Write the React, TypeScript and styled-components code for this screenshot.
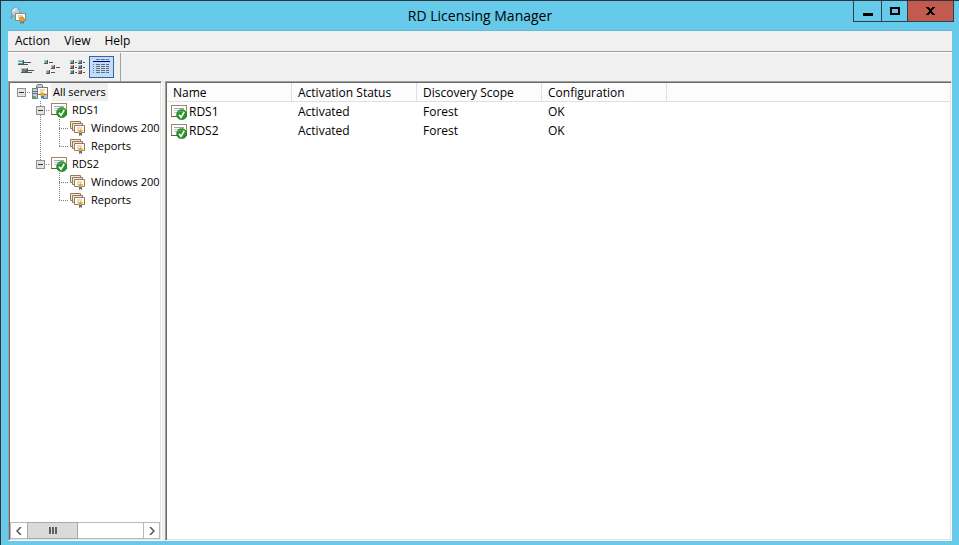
import React from "react";
import styled, { createGlobalStyle, css } from "styled-components";

const GlobalStyle = createGlobalStyle`
  *, *::before, *::after { box-sizing: border-box; }
  body { margin: 0; }
  body, button, table {
    font-family: "Open Sans", "Noto Sans", sans-serif;
    font-size: 12px;
    line-height: 18px;
    color: #000;
  }
  button { margin: 0; padding: 0; border: 0; background: none; }
  svg { display: block; }
`;

const Window = styled.div`
  display: flex;
  flex-direction: column;
  height: 100vh;
  padding: 0 7px 4px;
  border-top: 1px solid #30343a;
  border-left: 1px solid #30343a;
  background: #66caea;
  overflow: hidden;
`;

const TitleBar = styled.header`
  display: grid;
  grid-template-columns: 1fr auto 1fr;
  flex: none;
  height: 30px;
  border-bottom: 1px solid #6fb4d0;
`;

const AppIcon = styled.div`
  padding: 6px 2px;
`;

const Title = styled.h1`
  margin: 0;
  font-size: 14px;
  font-weight: 400;
  line-height: 29px;
`;

const Captions = styled.div`
  display: flex;
  justify-self: end;
  height: 22px;
  margin: -1px -2px 0 0;
  border: 1px solid #2f3e4c;
`;

const CaptionButton = styled.button<{ $width: number; $close?: boolean }>`
  display: grid;
  place-items: center;
  width: ${(p) => p.$width}px;
  background: ${(p) => (p.$close ? "#c25a50" : "transparent")};
  & + & { border-left: 1px solid #2f3e4c; }
`;

const Client = styled.main`
  display: flex;
  flex-direction: column;
  flex: 1;
  min-height: 0;
  background: #f0f0f0;
`;

const MenuBar = styled.nav`
  display: flex;
  height: 20px;
  flex: none;
`;

const MenuButton = styled.button`
  padding: 0 7px;
  line-height: 20px;
`;

const ToolBar = styled.div`
  display: flex;
  align-items: center;
  flex: none;
  height: 30px;
  padding-left: 6px;
  border-top: 1px solid #a0a0a0;
  box-shadow: inset 0 1px #fff;
`;

const ToolButton = styled.button<{ $active?: boolean }>`
  display: grid;
  place-items: center;
  width: 25px;
  height: 22px;
  border: 1px solid transparent;
  ${(p) => p.$active && css`
    border-color: #336699;
    background: #c2dcff;
  `}
`;

const ToolSeparator = styled.div`
  align-self: stretch;
  width: 1px;
  margin: 1px 0 0 6px;
  background: #a0a0a0;
`;

const Panes = styled.div`
  display: flex;
  flex: 1;
  gap: 3px;
  min-height: 0;
`;

const sunken = css`
  padding: 1px;
  border: 1px solid;
  border-color: #a0a0a0 #fff #fff #a0a0a0;
  box-shadow: inset 1px 1px #696969, inset -1px -1px #e3e3e3;
  background: #fff;
`;

const TreePane = styled.aside`
  ${sunken}
  display: flex;
  flex-direction: column;
  flex: none;
  width: 154px;
`;

const Tree = styled.div`
  flex: 1;
  padding-left: 2px;
  overflow: hidden;
  font-size: 11px;
`;

const TreeRow = styled.div`
  display: flex;
  height: 18px;
  white-space: nowrap;
`;

const TreeLabel = styled.span<{ $selected?: boolean }>`
  margin-left: 3px;
  padding: 0 2px;
  background: ${(p) => (p.$selected ? "#f0f0f0" : "transparent")};
`;

const TreeIcon = styled.span`
  flex: none;
  width: 17px;
  padding: 1px 0 0 1px;
`;

type GuideKind = "none" | "root" | "line" | "tee" | "end";

const dotsDown = "repeating-linear-gradient(to bottom, #808080 0 1px, transparent 1px 2px)";
const dotsAcross = "repeating-linear-gradient(to right, #808080 0 1px, transparent 1px 2px)";
const guides: Record<GuideKind, string> = {
  none: "none",
  root: `${dotsAcross} 9px 9px / 10px 1px no-repeat`,
  line: `${dotsDown} 9px 0 / 1px 18px no-repeat`,
  tee: `${dotsDown} 9px 0 / 1px 18px no-repeat, ${dotsAcross} 9px 9px / 10px 1px no-repeat`,
  end: `${dotsDown} 9px 0 / 1px 10px no-repeat, ${dotsAcross} 9px 9px / 10px 1px no-repeat`,
};

const Guide = styled.span<{ $kind: GuideKind }>`
  display: grid;
  place-items: center;
  flex: none;
  width: 19px;
  height: 18px;
  padding-top: 1px;
  background: ${(p) => guides[p.$kind]};
`;

const Expander = styled.button`
  width: 9px;
  height: 9px;
  border: 1px solid #919191;
  background: linear-gradient(#333, #333) 1px 3px / 5px 1px no-repeat, #e4e4e4;
`;

const ScrollBar = styled.div`
  display: flex;
  flex: none;
  height: 17px;
  border: 1px solid #b8b8b8;
  background: #fff;
`;

const ScrollArrow = styled.button<{ $side: "left" | "right" }>`
  display: grid;
  place-items: center;
  width: 16px;
  ${(p) => (p.$side === "right" ? "margin-left: auto; border-left: 1px solid #b8b8b8;" : "")}
`;

const ScrollThumb = styled.button`
  display: grid;
  place-items: center;
  width: 51px;
  margin: -1px 0;
  border: 1px solid #a8a8a8;
  background: #dadada;
`;

const ListPane = styled.section`
  ${sunken}
  flex: 1;
  min-width: 0;
`;

const Table = styled.table`
  width: 100%;
  border-collapse: separate;
  border-spacing: 0;
  table-layout: fixed;
`;

const Column = styled.col`
  width: 125px;
`;

const HeadCell = styled.th`
  height: 19px;
  padding: 2px 6px 0;
  border-right: 1px solid #e0e0e0;
  border-bottom: 1px solid #e0e0e0;
  background: #fcfcfc;
  font-weight: 400;
  line-height: 16px;
  text-align: left;
  white-space: nowrap;
  &:last-child { border-right: 0; }
`;

const Cell = styled.td`
  height: 19px;
  padding: 0 6px;
`;

const NameCell = styled(Cell)`
  padding: 0 4px;
`;

const NameContent = styled.div`
  display: flex;
  align-items: center;
  gap: 2px;
`;

function SearchLicenseIcon() {
  return (
    <svg width="17" height="17" viewBox="0 0 17 17" aria-hidden="true">
      <circle cx="5.5" cy="5" r="4.2" fill="#b7d3df" stroke="#8697a0" />
      <path d="M3 5a3 3 0 0 1 4-3" fill="none" stroke="#edf6fa" strokeWidth="1.3" />
      <path d="M2 8 1 12" stroke="#8b8f92" strokeWidth="1.6" />
      <rect x="5.5" y="6.5" width="10" height="7" fill="#fffdf6" stroke="#a08760" />
      <path d="M8 9h5M8 11h3" stroke="#a7adb4" />
      <path d="M10 13v4l2-1 2 1v-4" fill="#577fae" />
      <circle cx="12" cy="12.5" r="2.4" fill="#e6a321" stroke="#b3741b" strokeWidth=".6" />
    </svg>
  );
}

function ServersIcon() {
  return (
    <svg width="16" height="16" viewBox="0 0 16 16" aria-hidden="true">
      <path d="M4.5 1.5 6 .5h4l.5 1V7h-6z" fill="#c3ced6" stroke="#72828d" />
      <rect x=".5" y="4.5" width="5" height="10" fill="#c8d2d9" stroke="#72828d" />
      <path d="M1 7.5h4M1 9.5h4" stroke="#5b7281" />
      <rect x="1" y="12" width="3" height="2" fill="#5ab24b" />
      <rect x="11.5" y="8.5" width="4" height="6" fill="#aecde0" stroke="#72828d" />
      <rect x="5.5" y="3.5" width="10" height="7" fill="#fffdf8" stroke="#8a765c" />
      <path d="M8 6h5M8 8h2" stroke="#b5b5b5" />
      <path d="M9 11v4l1.5-1 1.5 1v-4" fill="#3b78bd" />
      <path d="m10.500 7.500 1 1.500 1.700.2-.8 1.500.5 1.700-2.400-.3-2 .3.300-1.700-.8-1.500 1.700-.2z" fill="#eda51e" />
    </svg>
  );
}

function ActivatedServerIcon() {
  return (
    <svg width="16" height="16" viewBox="0 0 16 16" aria-hidden="true">
      <rect x=".5" y="1.5" width="15" height="11" fill="#fffefa" stroke="#9c8765" />
      <path d="M0 12.5h16" stroke="#6b5942" />
      <path d="M3 4.5h10" stroke="#9ba6c4" />
      <path d="M3 6.5h7M3 8.5h4" stroke="#c2c7d5" />
      <circle cx="10.7" cy="10.7" r="5.1" fill="#259424" stroke="#17701c" strokeWidth=".6" />
      <path d="M7 8.5a5 5 0 0 1 7 0" fill="none" stroke="#66b75e" />
      <path d="m8 10.7 2 2.6 3.200-5.300" fill="none" stroke="#fff" strokeWidth="1.6" />
    </svg>
  );
}

function LicensesIcon() {
  return (
    <svg width="16" height="16" viewBox="0 0 16 16" aria-hidden="true">
      <g fill="#f0e6d6" stroke="#95795a">
        <path d="M.5 1.5h10v7H.5z" />
        <path d="M2.5 3.5h10v7h-10z" />
        <path d="M4.5 5.5h10v7h-10z" fill="#fffdf8" />
      </g>
      <path d="M7 8h5M7 10h2" stroke="#c4b9aa" />
      <path d="M9 12v4l1.5-1 1.5 1v-4" fill="#3c73ba" />
      <path d="m10.500 8.700.9 1.500 1.800.1-.9 1.500.4 1.600-2.200-.4-2.200.4.400-1.600-.9-1.500 1.800-.1z" fill="#eba41f" />
    </svg>
  );
}

function Tile({ x, y, w, h, color }: { x: number; y: number; w: number; h: number; color: string }) {
  return (
    <>
      <rect x={x} y={y} width={w} height={h} fill="#555" />
      <rect x={x} y={y} width={w - 1} height={h - 1} fill="#b8c4c4" />
      <rect x={x + 1} y={y + 1} width={w - 2} height={h - 2} fill={color} />
    </>
  );
}

const toolIcon = { width: 17, height: 16, viewBox: "0 0 17 16", shapeRendering: "crispEdges", "aria-hidden": true } as const;

function LargeViewIcon() {
  return (
    <svg {...toolIcon}>
      <Tile x={0} y={1} w={6} h={5} color="#3d9fb4" />
      <rect x="1" y="3" width="3" height="1" fill="#e8f8fa" />
      <path d="M6 3.500h7M6 5.500h4" stroke="#555" />
      <Tile x={3} y={9} w={7} h={5} color="#3da052" />
      <rect x="4" y="10" width="2" height="2" fill="#d04c32" />
      <rect x="7" y="11" width="2" height="2" fill="#3c6bd0" />
      <path d="M10 11.500h6M10 13.500h4" stroke="#555" />
    </svg>
  );
}

function SmallViewIcon() {
  return (
    <svg {...toolIcon}>
      <Tile x={1} y={1} w={4} h={4} color="#4cae9b" />
      <path d="M6 3.500h4" stroke="#555" />
      <Tile x={8} y={6} w={4} h={4} color="#c85b32" />
      <path d="M13 8.500h4" stroke="#555" />
      <Tile x={3} y={11} w={4} h={4} color="#51ad59" />
      <path d="M8 13.500h4" stroke="#555" />
    </svg>
  );
}

const listTiles = [
  [2, 1, "#399f9d"], [10, 1, "#3c9cb1"],
  [2, 6, "#c64f31"], [10, 6, "#377fac"],
  [2, 11, "#429c55"], [10, 11, "#c64f31"],
] as const;

function ListViewIcon() {
  return (
    <svg {...toolIcon}>
      {listTiles.map(([x, y, color]) => (
        <g key={`${x}-${y}`}>
          <Tile x={x} y={y} w={4} h={4} color={color} />
          <path d={`M${x + 5} ${y + 2}.5h2`} stroke="#555" />
        </g>
      ))}
    </svg>
  );
}

function DetailsViewIcon() {
  return (
    <svg {...toolIcon}>
      <path d="M3 .5h4M8 .5h4M13 .5h3" stroke="#6b7680" />
      <path d="M0 2.500h17" stroke="#00007b" />
      {[5, 7, 9, 11, 13].map((y, i) => (
        <g key={y}>
          <rect x="0" y={y} width="1" height="1" fill={["#3c8ca0", "#3f9b72", "#368dcc", "#c34d3c", "#4d9b42"][i]} />
          <path d={`M3 ${y}.5h4M8 ${y}.5h4M13 ${y}.5h3`} stroke="#606c78" />
        </g>
      ))}
    </svg>
  );
}

const toolButtons = [
  { label: "Large icons", Icon: LargeViewIcon },
  { label: "Small icons", Icon: SmallViewIcon },
  { label: "List", Icon: ListViewIcon },
  { label: "Details", Icon: DetailsViewIcon, active: true },
];

type Node = { text: string; guides: GuideKind[]; Icon: () => React.JSX.Element; level: number; expandable?: boolean; selected?: boolean };

const treeNodes: Node[] = [
  { text: "All servers", level: 1, guides: ["root"], Icon: ServersIcon, expandable: true, selected: true },
  { text: "RDS1", level: 2, guides: ["none", "tee"], Icon: ActivatedServerIcon, expandable: true },
  { text: "Windows 200", level: 3, guides: ["none", "line", "tee"], Icon: LicensesIcon },
  { text: "Reports", level: 3, guides: ["none", "line", "end"], Icon: LicensesIcon },
  { text: "RDS2", level: 2, guides: ["none", "end"], Icon: ActivatedServerIcon, expandable: true },
  { text: "Windows 200", level: 3, guides: ["none", "none", "tee"], Icon: LicensesIcon },
  { text: "Reports", level: 3, guides: ["none", "none", "end"], Icon: LicensesIcon },
];

const columns = ["Name", "Activation Status", "Discovery Scope", "Configuration"];
const servers = [
  { name: "RDS1", status: "Activated", scope: "Forest", configuration: "OK" },
  { name: "RDS2", status: "Activated", scope: "Forest", configuration: "OK" },
];

export default function App() {
  return (
    <>
      <GlobalStyle />
      <Window>
        <TitleBar>
          <AppIcon><SearchLicenseIcon /></AppIcon>
          <Title>RD Licensing Manager</Title>
          <Captions>
            <CaptionButton $width={27} aria-label="Minimize">
              <svg width="10" height="9"><rect y="6" width="10" height="3" /></svg>
            </CaptionButton>
            <CaptionButton $width={26} aria-label="Maximize">
              <svg width="10" height="8"><rect x="1" y="1" width="8" height="6" fill="none" stroke="#000" strokeWidth="2" /></svg>
            </CaptionButton>
            <CaptionButton $width={46} $close aria-label="Close">
              <svg width="9" height="8" shapeRendering="crispEdges">
                <path d="M0 0h3v1h1v1h1V1h1V0h3v1H8v1H7v1H6v2h1v1h1v1h1v1H6V7H5V6H4v1H3v1H0V7h1V6h1V5h1V3H2V2H1V1H0z" />
              </svg>
            </CaptionButton>
          </Captions>
        </TitleBar>
        <Client>
          <MenuBar aria-label="Menu">
            {["Action", "View", "Help"].map((item) => <MenuButton key={item}>{item}</MenuButton>)}
          </MenuBar>
          <ToolBar role="toolbar" aria-label="View mode">
            {toolButtons.map(({ label, Icon, active }) => (
              <ToolButton key={label} aria-label={label} aria-pressed={!!active} $active={active}><Icon /></ToolButton>
            ))}
            <ToolSeparator />
          </ToolBar>
          <Panes>
            <TreePane>
              <Tree role="tree" aria-label="Servers">
                {treeNodes.map(({ text, level, guides: kinds, Icon, expandable, selected }, i) => (
                  <TreeRow key={i} role="treeitem" aria-level={level} aria-selected={!!selected}>
                    {kinds.map((kind, g) => (
                      <Guide key={g} $kind={kind}>
                        {expandable && g === kinds.length - 1 && <Expander aria-label={`Collapse ${text}`} />}
                      </Guide>
                    ))}
                    <TreeIcon><Icon /></TreeIcon>
                    <TreeLabel $selected={selected}>{text}</TreeLabel>
                  </TreeRow>
                ))}
              </Tree>
              <ScrollBar>
                <ScrollArrow $side="left" aria-label="Scroll left">
                  <svg width="6" height="8"><path d="M5 0 1 4l4 4" fill="none" stroke="#555" strokeWidth="1.5" /></svg>
                </ScrollArrow>
                <ScrollThumb aria-label="Scroll position">
                  <svg width="8" height="7"><path d="M1 0v7M4 0v7M7 0v7" stroke="#606060" strokeWidth="2" /></svg>
                </ScrollThumb>
                <ScrollArrow $side="right" aria-label="Scroll right">
                  <svg width="6" height="8"><path d="m1 0 4 4-4 4" fill="none" stroke="#555" strokeWidth="1.5" /></svg>
                </ScrollArrow>
              </ScrollBar>
            </TreePane>
            <ListPane>
              <Table>
                <colgroup>
                  {columns.map((c) => <Column key={c} />)}
                  <col />
                </colgroup>
                <thead>
                  <tr>
                    {columns.map((c) => <HeadCell key={c} scope="col">{c}</HeadCell>)}
                    <HeadCell as="td" />
                  </tr>
                </thead>
                <tbody>
                  {servers.map((s) => (
                    <tr key={s.name}>
                      <NameCell><NameContent><ActivatedServerIcon />{s.name}</NameContent></NameCell>
                      <Cell>{s.status}</Cell>
                      <Cell>{s.scope}</Cell>
                      <Cell>{s.configuration}</Cell>
                      <Cell />
                    </tr>
                  ))}
                </tbody>
              </Table>
            </ListPane>
          </Panes>
        </Client>
      </Window>
    </>
  );
}
